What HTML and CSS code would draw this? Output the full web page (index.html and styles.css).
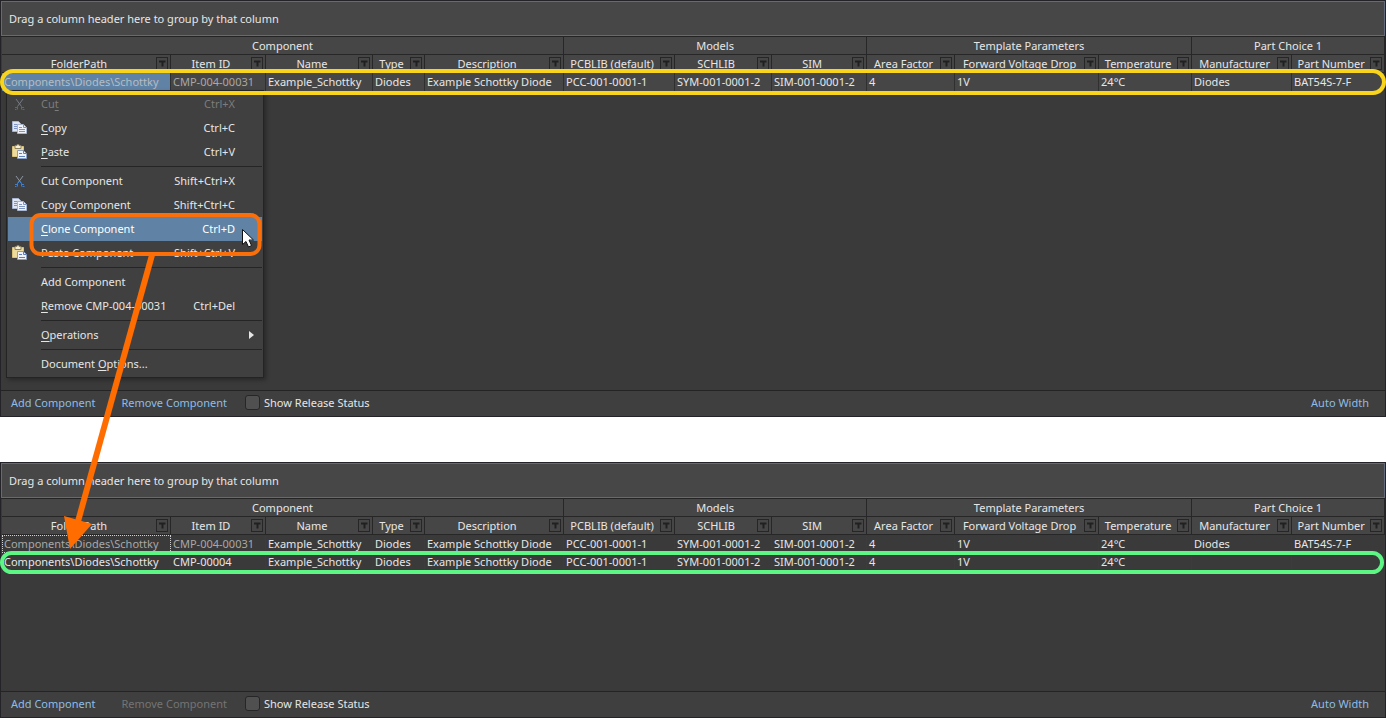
FILE: index.html
```html
<!DOCTYPE html>
<html lang="en">
<head>
    <meta charset="UTF-8">
    <meta name="viewport" content="width=device-width, initial-scale=1.0">
    <title>Clone Component</title>
    <link rel="stylesheet" href="styles.css">
</head>
<body>
    <!-- Shared icons -->
    <svg class="icon-defs" aria-hidden="true">
        <symbol id="icon-filter" viewBox="0 0 10 11">
            <path d="M2 2.500h6.500v2H6.500v4h-2v-4H2z" fill="currentColor"/>
        </symbol>
        <symbol id="icon-cut" viewBox="0 0 16 16">
            <path d="M4 3L9.500 10.500M11 3L5.500 10.500" fill="none" stroke="#8d97a3"/>
            <path d="M5.500 10.500L7.500 8.500l2 2M3 11.500h3M9 11.500h3M5.500 11v2.500M9.500 11v2.500M3 13.500h1.500M10.500 13.500h2" fill="none" stroke="currentColor"/>
        </symbol>
        <symbol id="icon-copy" viewBox="0 0 16 16">
            <path d="M.5 1.500h6l2 2v8h-8z" fill="#dfe6f2" stroke="#a9b6d0"/>
            <path d="M2 4.500h4M2 6.500h3M2 8.500h3" stroke="#7f96c4"/>
            <path d="M5.500 4.500h6l3 3v6h-9z" fill="#f0f4fa" stroke="#a9b6d0"/>
            <path d="M11.500 4.500v3h3M7 7.500h3M7 9.500h6M7 11.500h6" fill="none" stroke="#7f96c4"/>
        </symbol>
        <symbol id="icon-paste" viewBox="0 0 16 16">
            <path d="M.5 2.500h11v10H.5z" fill="#ecdb9c" stroke="#d9c27a"/>
            <path d="M3 1.500h2V.5h2v1h2v3H3z" fill="#f5efd8" stroke="#8f8260"/>
            <path d="M5.500 6.500h6l3 3v5h-9z" fill="#f0f4fa" stroke="#8c9dc2"/>
            <path d="M11.500 6.500v3h3M7 9.500h3M7 12.500h6" fill="none" stroke="#5f80c0"/>
        </symbol>
    </svg>

    <!-- Before: context menu opened on the source component -->
    <section class="panel panel-before">
        <div class="group-bar">Drag a column header here to group by that column</div>
        <div class="grid">
            <table class="grid-table selected">
                <colgroup>
                    <col class="c-folder"><col class="c-item"><col class="c-name"><col class="c-type"><col class="c-desc">
                    <col class="c-pcb"><col class="c-sch"><col class="c-sim"><col class="c-area"><col class="c-volt">
                    <col class="c-temp"><col class="c-manu"><col class="c-part">
                </colgroup>
                <thead>
                    <tr>
                        <th colspan="5">Component</th>
                        <th colspan="3">Models</th>
                        <th colspan="3">Template Parameters</th>
                        <th colspan="2">Part Choice 1</th>
                    </tr>
                    <tr>
                        <th><div class="head"><span>FolderPath</span><button class="filter" aria-label="Filter"><svg><use href="#icon-filter"/></svg></button></div></th>
                        <th><div class="head"><span>Item ID</span><button class="filter" aria-label="Filter"><svg><use href="#icon-filter"/></svg></button></div></th>
                        <th><div class="head"><span>Name</span><button class="filter" aria-label="Filter"><svg><use href="#icon-filter"/></svg></button></div></th>
                        <th><div class="head"><span>Type</span><button class="filter" aria-label="Filter"><svg><use href="#icon-filter"/></svg></button></div></th>
                        <th><div class="head"><span>Description</span><button class="filter" aria-label="Filter"><svg><use href="#icon-filter"/></svg></button></div></th>
                        <th><div class="head"><span>PCBLIB (default)</span><button class="filter" aria-label="Filter"><svg><use href="#icon-filter"/></svg></button></div></th>
                        <th><div class="head"><span>SCHLIB</span><button class="filter" aria-label="Filter"><svg><use href="#icon-filter"/></svg></button></div></th>
                        <th><div class="head"><span>SIM</span><button class="filter" aria-label="Filter"><svg><use href="#icon-filter"/></svg></button></div></th>
                        <th><div class="head"><span>Area Factor</span><button class="filter" aria-label="Filter"><svg><use href="#icon-filter"/></svg></button></div></th>
                        <th><div class="head"><span>Forward Voltage Drop</span><button class="filter" aria-label="Filter"><svg><use href="#icon-filter"/></svg></button></div></th>
                        <th><div class="head"><span>Temperature</span><button class="filter" aria-label="Filter"><svg><use href="#icon-filter"/></svg></button></div></th>
                        <th><div class="head"><span>Manufacturer</span><button class="filter" aria-label="Filter"><svg><use href="#icon-filter"/></svg></button></div></th>
                        <th><div class="head"><span>Part Number</span><button class="filter" aria-label="Filter"><svg><use href="#icon-filter"/></svg></button></div></th>
                    </tr>
                </thead>
                <tbody>
                    <tr>
                        <td class="muted active">Components\Diodes\Schottky</td>
                        <td class="muted">CMP-004-00031</td>
                        <td>Example_Schottky</td>
                        <td>Diodes</td>
                        <td>Example Schottky Diode</td>
                        <td>PCC-001-0001-1</td>
                        <td>SYM-001-0001-2</td>
                        <td>SIM-001-0001-2</td>
                        <td>4</td>
                        <td>1V</td>
                        <td>24°C</td>
                        <td>Diodes</td>
                        <td>BAT54S-7-F</td>
                    </tr>
                </tbody>
            </table>
        </div>
        <div class="footer">
            <button class="link">Add Component</button>
            <button class="link">Remove Component</button>
            <label class="check"><input type="checkbox">Show Release Status</label>
            <button class="link auto">Auto Width</button>
        </div>

        <div class="menu" role="menu">
            <button class="item" disabled><svg class="icon cut"><use href="#icon-cut"/></svg><span>Cu<u>t</u></span><kbd>Ctrl+X</kbd></button>
            <button class="item"><svg class="icon"><use href="#icon-copy"/></svg><span><u>C</u>opy</span><kbd>Ctrl+C</kbd></button>
            <button class="item"><svg class="icon"><use href="#icon-paste"/></svg><span><u>P</u>aste</span><kbd>Ctrl+V</kbd></button>
            <hr>
            <button class="item"><svg class="icon cut"><use href="#icon-cut"/></svg><span>Cut Component</span><kbd>Shift+Ctrl+X</kbd></button>
            <button class="item"><svg class="icon"><use href="#icon-copy"/></svg><span>Copy Component</span><kbd>Shift+Ctrl+C</kbd></button>
            <button class="item hover"><span><u>C</u>lone Component</span><kbd>Ctrl+D</kbd></button>
            <button class="item"><svg class="icon"><use href="#icon-paste"/></svg><span>Paste Component</span><kbd>Shift+Ctrl+V</kbd></button>
            <hr>
            <button class="item"><span>Add Component</span></button>
            <button class="item"><span><u>R</u>emove CMP-004-00031</span><kbd>Ctrl+Del</kbd></button>
            <hr>
            <button class="item submenu"><span><u>O</u>perations</span></button>
            <hr>
            <button class="item"><span>Document <u>O</u>ptions...</span></button>
        </div>
        <div class="ring ring-source"></div>
    </section>

    <!-- After: cloned component added as a new row -->
    <section class="panel panel-after">
        <div class="group-bar">Drag a column header here to group by that column</div>
        <div class="grid">
            <table class="grid-table">
                <colgroup>
                    <col class="c-folder"><col class="c-item"><col class="c-name"><col class="c-type"><col class="c-desc">
                    <col class="c-pcb"><col class="c-sch"><col class="c-sim"><col class="c-area"><col class="c-volt">
                    <col class="c-temp"><col class="c-manu"><col class="c-part">
                </colgroup>
                <thead>
                    <tr>
                        <th colspan="5">Component</th>
                        <th colspan="3">Models</th>
                        <th colspan="3">Template Parameters</th>
                        <th colspan="2">Part Choice 1</th>
                    </tr>
                    <tr>
                        <th><div class="head"><span>FolderPath</span><button class="filter" aria-label="Filter"><svg><use href="#icon-filter"/></svg></button></div></th>
                        <th><div class="head"><span>Item ID</span><button class="filter" aria-label="Filter"><svg><use href="#icon-filter"/></svg></button></div></th>
                        <th><div class="head"><span>Name</span><button class="filter" aria-label="Filter"><svg><use href="#icon-filter"/></svg></button></div></th>
                        <th><div class="head"><span>Type</span><button class="filter" aria-label="Filter"><svg><use href="#icon-filter"/></svg></button></div></th>
                        <th><div class="head"><span>Description</span><button class="filter" aria-label="Filter"><svg><use href="#icon-filter"/></svg></button></div></th>
                        <th><div class="head"><span>PCBLIB (default)</span><button class="filter" aria-label="Filter"><svg><use href="#icon-filter"/></svg></button></div></th>
                        <th><div class="head"><span>SCHLIB</span><button class="filter" aria-label="Filter"><svg><use href="#icon-filter"/></svg></button></div></th>
                        <th><div class="head"><span>SIM</span><button class="filter" aria-label="Filter"><svg><use href="#icon-filter"/></svg></button></div></th>
                        <th><div class="head"><span>Area Factor</span><button class="filter" aria-label="Filter"><svg><use href="#icon-filter"/></svg></button></div></th>
                        <th><div class="head"><span>Forward Voltage Drop</span><button class="filter" aria-label="Filter"><svg><use href="#icon-filter"/></svg></button></div></th>
                        <th><div class="head"><span>Temperature</span><button class="filter" aria-label="Filter"><svg><use href="#icon-filter"/></svg></button></div></th>
                        <th><div class="head"><span>Manufacturer</span><button class="filter" aria-label="Filter"><svg><use href="#icon-filter"/></svg></button></div></th>
                        <th><div class="head"><span>Part Number</span><button class="filter" aria-label="Filter"><svg><use href="#icon-filter"/></svg></button></div></th>
                    </tr>
                </thead>
                <tbody>
                    <tr>
                        <td class="muted focused">Components\Diodes\Schottky</td>
                        <td class="muted">CMP-004-00031</td>
                        <td>Example_Schottky</td>
                        <td>Diodes</td>
                        <td>Example Schottky Diode</td>
                        <td>PCC-001-0001-1</td>
                        <td>SYM-001-0001-2</td>
                        <td>SIM-001-0001-2</td>
                        <td>4</td>
                        <td>1V</td>
                        <td>24°C</td>
                        <td>Diodes</td>
                        <td>BAT54S-7-F</td>
                    </tr>
                    <tr>
                        <td>Components\Diodes\Schottky</td>
                        <td>CMP-00004</td>
                        <td>Example_Schottky</td>
                        <td>Diodes</td>
                        <td>Example Schottky Diode</td>
                        <td>PCC-001-0001-1</td>
                        <td>SYM-001-0001-2</td>
                        <td>SIM-001-0001-2</td>
                        <td>4</td>
                        <td>1V</td>
                        <td>24°C</td>
                        <td></td>
                        <td></td>
                    </tr>
                </tbody>
            </table>
        </div>
        <div class="footer">
            <button class="link">Add Component</button>
            <button class="link" disabled>Remove Component</button>
            <label class="check"><input type="checkbox">Show Release Status</label>
            <button class="link auto">Auto Width</button>
        </div>
        <div class="ring ring-clone"></div>
    </section>

    <!-- Callout, arrow and mouse pointer -->
    <svg class="callout" width="280" height="560" aria-hidden="true">
        <rect x="31.500" y="215" width="228" height="39" rx="9" fill="none" stroke="#fb6f0b" stroke-width="4"/>
        <path d="M152 255L77 525" stroke="#ff6c00" stroke-width="6"/>
        <path d="M64 516L92 524L70 549z" fill="#ff6c00"/>
        <path d="M242.500 229.500v15l3.500-3 2.500 5.500 3-1.500-2.500-5.500h4.500z" fill="#fff" stroke="#111"/>
    </svg>
</body>
</html>
```
FILE: styles.css
```css
* {
    margin: 0;
    padding: 0;
    box-sizing: border-box;
}
body {
    position: relative;
    display: flex;
    flex-direction: column;
    gap: 45px;
    min-height: 100vh;
    background: #fff;
    color: #e6e6e6;
    font-family: "Noto Sans", "Segoe UI", sans-serif;
    font-size: 11px;
    line-height: 16px;
}
button {
    font: inherit;
    color: inherit;
    background: none;
    border: none;
}
.icon-defs {
    position: absolute;
    width: 0;
    height: 0;
}

/* Panels */
.panel {
    position: relative;
    display: flex;
    flex-direction: column;
    background: #3a3a3a;
    border: 1px solid #242428;
}
.panel-after {
    flex: 1;
}
.group-bar {
    padding: 9px 7px 8px;
    background: #474747;
    border: 1px solid #626b7c;
}
.grid {
    flex: 1;
    padding-left: 1px;
    border-top: 1px solid #242424;
}
.panel-before .grid {
    min-height: 354px;
}

/* Component grid */
.grid-table {
    width: 100%;
    table-layout: fixed;
    border-collapse: separate;
    border-spacing: 0;
}
.c-folder { width: 169px; }
.c-item { width: 95px; }
.c-name { width: 107px; }
.c-type { width: 52px; }
.c-desc { width: 139px; }
.c-pcb { width: 111px; }
.c-sch { width: 97px; }
.c-sim { width: 95px; }
.c-area { width: 88px; }
.c-volt { width: 144px; }
.c-temp { width: 93px; }
.c-manu { width: 100px; }
.c-part { width: 93px; }
th {
    height: 18px;
    font-weight: normal;
    background: #464646;
    border-right: 1px solid #272727;
    border-bottom: 1px solid #272727;
    white-space: nowrap;
}
td {
    height: 18px;
    padding-left: 2px;
    border-right: 1px solid #3c3c3c;
    white-space: nowrap;
}
.selected td {
    background: #464646;
    border-right-color: #303030;
}
.muted {
    color: #a8a8a8;
}
.selected td.active {
    background: #6083a5;
    color: #b4bcc4;
}
.focused {
    outline: 1px dotted #d0d0d0;
    outline-offset: -1px;
}
.head {
    display: flex;
    align-items: center;
    height: 17px;
    padding-right: 2px;
}
.head span {
    flex: 1;
    text-align: center;
}
.filter {
    width: 12px;
    height: 13px;
    border: 1px solid #262626;
    color: #202020;
}
.filter svg {
    display: block;
    width: 10px;
    height: 11px;
}

/* Footer */
.footer {
    display: flex;
    align-items: center;
    gap: 26px;
    height: 26px;
    padding: 0 16px 2px 10px;
    background: #3f3f3f;
    border-top: 1px solid #242424;
}
.link {
    color: #8dbde6;
    cursor: pointer;
}
.link:disabled {
    color: #747474;
    cursor: default;
}
.auto {
    margin-left: auto;
}
.check {
    display: flex;
    align-items: center;
    gap: 4px;
    margin-left: -8px;
}
.check input {
    appearance: none;
    width: 15px;
    height: 15px;
    background: #505050;
    border: 1px solid #262626;
    border-radius: 3px;
}

/* Context menu */
.menu {
    position: absolute;
    top: 89px;
    left: 5px;
    width: 258px;
    padding: 1px;
    background: #404040;
    border: 1px solid #242424;
    box-shadow: 2px 2px 4px rgba(0, 0, 0, 0.3);
}
.item {
    display: flex;
    align-items: center;
    position: relative;
    width: 100%;
    height: 24px;
    padding: 0 27px 0 33px;
    text-align: left;
}
.item span {
    flex: 1;
}
.item kbd {
    font: inherit;
}
.item:disabled {
    color: #7c7c7c;
}
.item.hover {
    background: #6083a5;
    color: #fff;
}
.item u {
    text-underline-offset: 2px;
}
.icon {
    position: absolute;
    left: 4px;
    width: 16px;
    height: 16px;
}
.cut {
    color: #3f7fd0;
}
.item:disabled .cut {
    color: #777;
    opacity: 0.7;
}
.submenu::after {
    content: "";
    position: absolute;
    right: 8px;
    border: 4px solid transparent;
    border-left: 5px solid #e6e6e6;
    border-right-width: 0;
}
.menu hr {
    height: 1px;
    margin: 2px 0 2px 33px;
    border: none;
    background: #252525;
}

/* Row highlights and callout */
.ring {
    position: absolute;
    left: -1px;
    height: 26px;
    border: 4px solid #f8d51c;
    border-radius: 13px;
}
.ring-source {
    top: 68px;
    right: -1px;
}
.ring-clone {
    top: 88px;
    right: 1px;
    height: 23px;
    border-color: #5df584;
}
.callout {
    position: absolute;
    top: 0;
    left: 0;
    pointer-events: none;
}
```
